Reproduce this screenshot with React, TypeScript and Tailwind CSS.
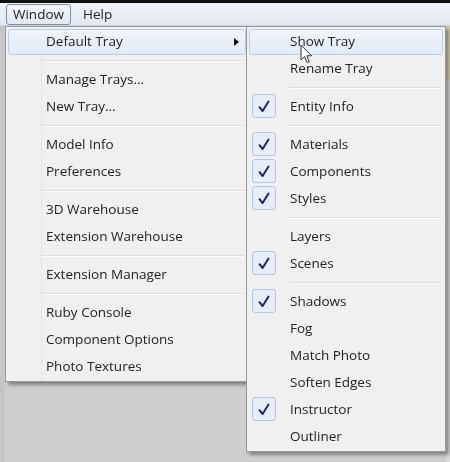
import React from 'react'

type Item = { label: string; checked?: boolean; hot?: boolean; sub?: boolean } | 'sep'

const mainItems: Item[] = [
    {label: 'Default Tray', hot: true, sub: true},
    'sep',
    {label: 'Manage Trays...'},
    {label: 'New Tray...'},
    'sep',
    {label: 'Model Info'},
    {label: 'Preferences'},
    'sep',
    {label: '3D Warehouse'},
    {label: 'Extension Warehouse'},
    'sep',
    {label: 'Extension Manager'},
    'sep',
    {label: 'Ruby Console'},
    {label: 'Component Options'},
    {label: 'Photo Textures'},
]

const trayItems: Item[] = [
    {label: 'Show Tray', hot: true},
    {label: 'Rename Tray'},
    'sep',
    {label: 'Entity Info', checked: true},
    'sep',
    {label: 'Materials', checked: true},
    {label: 'Components', checked: true},
    {label: 'Styles', checked: true},
    'sep',
    {label: 'Layers'},
    {label: 'Scenes', checked: true},
    'sep',
    {label: 'Shadows', checked: true},
    {label: 'Fog'},
    {label: 'Match Photo'},
    {label: 'Soften Edges'},
    {label: 'Instructor', checked: true},
    {label: 'Outliner'},
]

export default function App() {
    return (
        <div className="relative w-[450px] h-[462px] overflow-hidden bg-[#cecece] text-[13.5px] text-[#222] font-['Open_Sans','Liberation_Sans',sans-serif] blur-[0.4px]">
            <div className="h-[3px] bg-[#111]"/>
            <div className="h-[23px] flex items-center gap-[12px] pl-[6px] bg-gradient-to-b from-[#f0f3fa] to-[#e2e8f3] border-b border-[#cbd3e0]">
                <div className="h-[21px] px-[6px] flex items-center rounded-[3px] border border-[#7f8da3] bg-gradient-to-b from-[#f3f6fb] to-[#e2e8f2]">Window</div>
                <div>Help</div>
            </div>
            <div className="flex h-[436px]">
                <div className="w-[5px] bg-[#c6c6c6]"/>
                <div className="flex-1"/>
                <div className="w-[4px] flex flex-col">
                    <div className="h-[54px] bg-[#d8cfb2]"/>
                    <div className="flex-1 bg-[#dadada]"/>
                </div>
            </div>

            <Menu items={mainItems} className="left-[5px] top-[26px] w-[244px]" gutter={35} sepLeft={35}/>
            <Menu items={trayItems} className="left-[246px] top-[26px] w-[200px]" gutter={0} sepLeft={42} tray/>

            <svg className="absolute left-[300px] top-[44px]" width="14" height="21" viewBox="0 0 14 21">
                <path d="M1 1 L1 16 L4.5 12.5 L7 18.5 L9.2 17.6 L6.8 11.8 L11.5 11.8 Z" fill="#fff" stroke="#333"
                      strokeWidth="1" strokeLinejoin="round"/>
            </svg>
        </div>
    )
}

function Menu({items, className, gutter, sepLeft, tray}: {
    items: Item[];
    className: string;
    gutter: number;
    sepLeft: number;
    tray?: boolean
}) {
    return (
        <div
            className={`absolute ${className} bg-[#f0f0f0] border border-[#979797] py-[1px] shadow-[3px_3px_3px_rgba(0,0,0,0.35)]`}>
            {gutter > 0 && (
                <div className="absolute top-0 bottom-0 border-l border-[#e2e3e3]" style={{left: gutter}}/>
            )}
            {items.map((it, i) => it === 'sep' ? (
                <div key={i} className="h-[11px] flex items-center pr-[4px]" style={{paddingLeft: sepLeft}}>
                    <div className="w-full h-[2px] border-t border-[#dcdcdc] border-b border-b-white"/>
                </div>
            ) : (
                <div key={i} className="relative h-[27px] flex items-center">
                    {it.hot && (
                        <div
                            className="absolute left-[2px] right-[2px] top-[1px] bottom-0 rounded-[3px] border border-[#b9cde9] bg-gradient-to-b from-[#f1f5fb] to-[#e1eaf7]"/>
                    )}
                    {tray && it.checked && (
                        <div
                            className="absolute left-[5px] top-[1px] w-[24px] h-[24px] rounded-[3px] border border-[#b3c7e4] bg-[#e7eef9] flex items-center justify-center">
                            <svg width="12" height="13" viewBox="0 0 12 13">
                                <path d="M1.5 7.2 L4.6 11 L10.5 1.5" fill="none" stroke="#24246e" strokeWidth="2"
                                      strokeLinejoin="round" strokeLinecap="round"/>
                            </svg>
                        </div>
                    )}
                    <span className="relative" style={{paddingLeft: tray ? 43 : 40}}>{it.label}</span>
                    {it.sub && (
                        <svg className="absolute right-[9px] top-[10px]" width="5" height="8" viewBox="0 0 5 8">
                            <path d="M0 0 L5 4 L0 8 Z" fill="#111"/>
                        </svg>
                    )}
                </div>
            ))}
        </div>
    )
}
